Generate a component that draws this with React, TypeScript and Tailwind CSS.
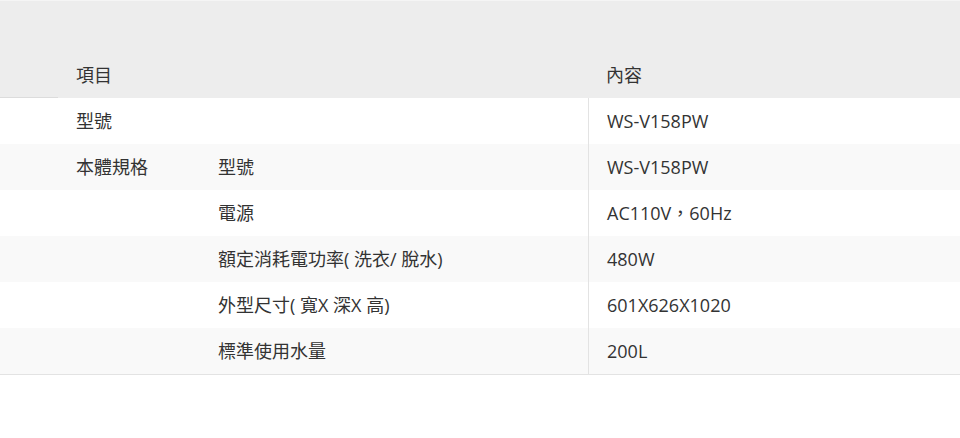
const rows: { group?: string; label: string; value: string }[] = [
  { group: "型號", label: "", value: "WS-V158PW" },
  { group: "本體規格", label: "型號", value: "WS-V158PW" },
  { label: "電源", value: "AC110V，60Hz" },
  { label: "額定消耗電功率( 洗衣/ 脫水)", value: "480W" },
  { label: "外型尺寸( 寬X 深X 高)", value: "601X626X1020" },
  { label: "標準使用水量", value: "200L" },
];

export default function App() {
  return (
    <div
      className="w-[960px] h-[438px] bg-white text-[18px] text-[#333]"
      style={{ fontFamily: '"Open Sans", "Noto Sans CJK TC", sans-serif' }}
    >
      <div className="h-[52px] bg-[#ededed] border-t border-[#f5f5f5]" />
      <div className="flex h-[46px] bg-[#ededed]">
        <div className="w-[58px] self-end border-b border-[#dcdcdc]" />
        <div className="w-[530px] flex items-center pl-[18px]">項目</div>
        <div className="flex-1 flex items-center pl-[18px]">內容</div>
      </div>
      <div className="border-b border-[#e3e3e3]">
        {rows.map((r, i) => (
          <div key={i} className={`flex h-[46px] ${i % 2 === 1 ? "bg-[#f9f9f9]" : "bg-white"}`}>
            <div className="w-[58px]" />
            <div className="w-[142px] flex items-center pl-[18px]">{r.group ?? ""}</div>
            <div className="w-[388px] flex items-center pl-[18px]">{r.label}</div>
            <div className="flex-1 flex items-center pl-[18px] border-l border-[#e3e3e3]">{r.value}</div>
          </div>
        ))}
      </div>
    </div>
  );
}
